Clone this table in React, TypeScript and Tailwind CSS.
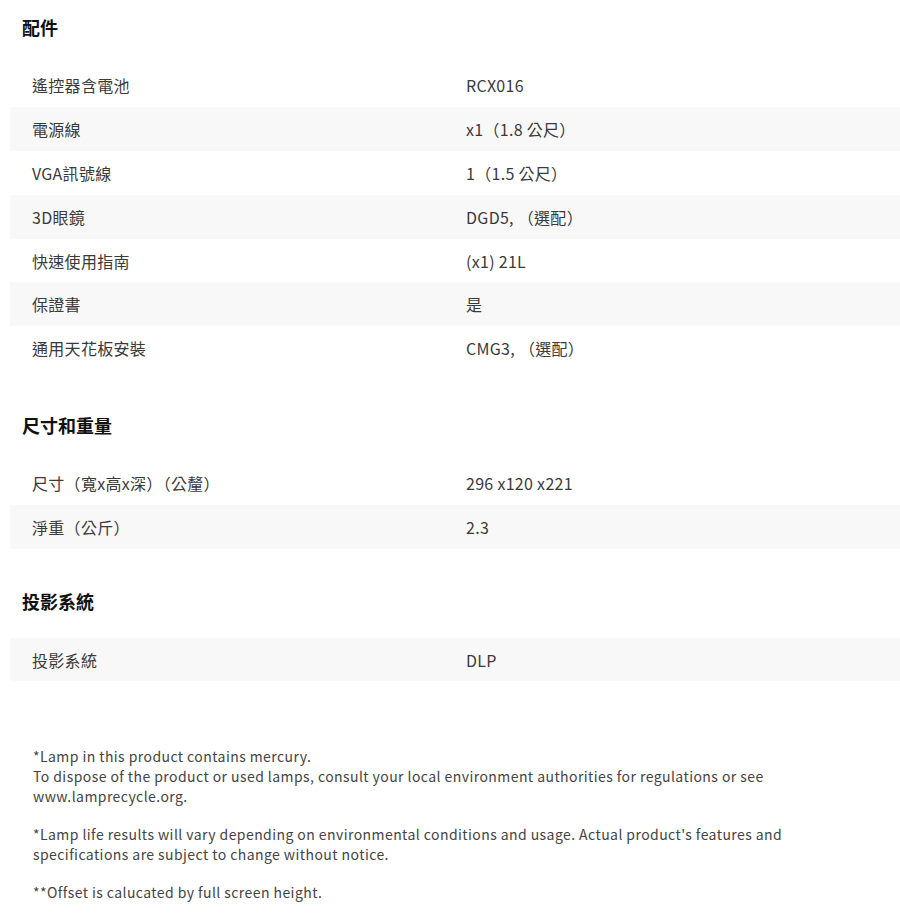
import React from "react";

type Row = [string, string];

const sections: { title: string; rows: Row[]; startGray?: boolean }[] = [
  {
    title: "配件",
    rows: [
      ["遙控器含電池", "RCX016"],
      ["電源線", "x1（1.8 公尺）"],
      ["VGA訊號線", "1（1.5 公尺）"],
      ["3D眼鏡", "DGD5, （選配）"],
      ["快速使用指南", "(x1) 21L"],
      ["保證書", "是"],
      ["通用天花板安裝", "CMG3, （選配）"],
    ],
  },
  {
    title: "尺寸和重量",
    rows: [
      ["尺寸（寬x高x深）（公釐）", "296 x120 x221"],
      ["淨重（公斤）", "2.3"],
    ],
  },
  {
    title: "投影系統",
    rows: [["投影系統", "DLP"]],
    startGray: true,
  },
];

function Section({ title, rows, startGray }: { title: string; rows: Row[]; startGray?: boolean }) {
  return (
    <div>
      <h2 className="pl-[22px] h-[54px] flex items-center text-[18px] font-bold text-[#111]">{title}</h2>
      <div className="mt-[9.5px] ml-[10px]">
        {rows.map((r, i) => {
          const gray = startGray ? i % 2 === 0 : i % 2 === 1;
          return (
            <div
              key={i}
              className={`grid grid-cols-[434px_1fr] h-[43.8px] items-center text-[16px] tracking-[0.3px] text-[#3a3a3a] ${gray ? "bg-[#f8f8f8]" : "bg-white"}`}
            >
              <div className="pl-[22px]">{r[0]}</div>
              <div className="pl-[22px]">{r[1]}</div>
            </div>
          );
        })}
      </div>
    </div>
  );
}

export default function App() {
  return (
    <div
      className="w-[900px] min-h-[923px] bg-white"
      style={{ fontFamily: '"Noto Sans CJK TC", "Noto Sans", sans-serif' }}
    >
      <Section {...sections[0]} />
      <div className="mt-[28px]">
        <Section {...sections[1]} />
      </div>
      <div className="mt-[25px]">
        <Section {...sections[2]} />
      </div>
      <div className="pl-[33px] pt-[66px] text-[14px] leading-[19.6px] tracking-[0.43px] text-[#444]">
        <p>
          *Lamp in this product contains mercury.
          <br />
          To dispose of the product or used lamps, consult your local environment authorities for regulations or see
          www.lamprecycle.org.
        </p>
        <p className="mt-[19px] pr-[100px]">
          *Lamp life results will vary depending on environmental conditions and usage. Actual product's features and
          specifications are subject to change without notice.
        </p>
        <p className="mt-[19px]">**Offset is calucated by full screen height.</p>
      </div>
    </div>
  );
}
